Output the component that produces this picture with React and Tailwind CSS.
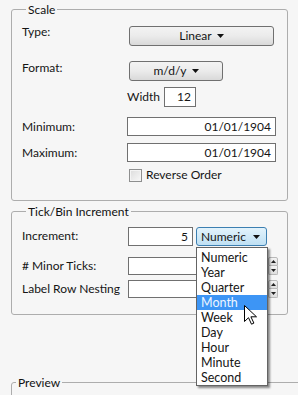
import React from 'react';

const Caret = () => (
  <svg width="7" height="4" viewBox="0 0 7 4" className="shrink-0">
    <path d="M0 0h7L3.5 4z" fill="#111" />
  </svg>
);

const Spinner = () => (
  <div className="flex flex-col w-[10px] h-[18px] ml-[1px]">
    <div className="h-[9px] bg-gradient-to-b from-[#f4f4f4] to-[#dedede] border border-[#b9b9b9] rounded-t-[2px] flex items-center justify-center">
      <svg width="5" height="3" viewBox="0 0 5 3"><path d="M0 3h5L2.5 0z" fill="#222" /></svg>
    </div>
    <div className="h-[9px] bg-gradient-to-b from-[#f4f4f4] to-[#dedede] border border-t-0 border-[#b9b9b9] rounded-b-[2px] flex items-center justify-center">
      <svg width="5" height="3" viewBox="0 0 5 3"><path d="M0 0h5L2.5 3z" fill="#222" /></svg>
    </div>
  </div>
);

const Legend = ({ children }) => (
  <legend className="ml-[4px] px-[2px] leading-[17px] text-[#111]">{children}</legend>
);

const items = ['Numeric', 'Year', 'Quarter', 'Month', 'Week', 'Day', 'Hour', 'Minute', 'Second'];

export default function App() {
  return (
    <div className="relative w-[298px] h-[395px] overflow-hidden bg-[#f6f6f6] font-[Lato,sans-serif] text-[12px] leading-[16px] text-[#151515] pl-[11px] pr-[10px] pt-[1px]">
      {/* Scale */}
      <fieldset className="h-[200px] border border-[#adadad] rounded-[3px] pl-[10px]">
        <Legend>Scale</Legend>

        <div className="flex items-start mt-[8px] h-[20px]">
          <span className="w-[107px] -mt-[2px]">Type:</span>
          <button className="w-[145px] h-[20px] flex items-center justify-center gap-[5px] rounded-[3px] border border-[#707070] bg-gradient-to-b from-[#f3f3f3] via-[#ebebeb] to-[#d9d9d9]">
            <span>Linear</span>
            <Caret />
          </button>
        </div>

        <div className="flex items-start mt-[15px] h-[20px]">
          <span className="w-[107px] -mt-[1px]">Format:</span>
          <button className="w-[94px] h-[20px] flex items-center justify-center gap-[5px] rounded-[3px] border border-[#707070] bg-gradient-to-b from-[#f3f3f3] via-[#ebebeb] to-[#d9d9d9]">
            <span>m/d/y</span>
            <Caret />
          </button>
        </div>

        <div className="flex items-center mt-[6px] h-[20px]">
          <span className="ml-[105px] w-[37px]">Width</span>
          <div className="w-[32px] h-[20px] bg-white border border-[#707070] text-right pr-[4px] leading-[18px]">12</div>
        </div>

        <div className="flex items-center mt-[10px] h-[19px]">
          <span className="w-[105px]">Minimum:</span>
          <div className="w-[149px] h-[19px] bg-white border border-[#707070] text-right pr-[4px] leading-[17px]">01/01/1904</div>
        </div>

        <div className="flex items-center mt-[7px] h-[19px]">
          <span className="w-[105px]">Maximum:</span>
          <div className="w-[149px] h-[19px] bg-white border border-[#707070] text-right pr-[4px] leading-[17px]">01/01/1904</div>
        </div>

        <div className="flex items-center mt-[6px] h-[14px] ml-[107px]">
          <span className="w-[13px] h-[13px] border border-[#8e8f8f] bg-gradient-to-br from-[#dcdcdc] to-[#f8f8f8] shadow-[inset_0_0_0_1px_#f4f4f4]" />
          <span className="ml-[4px]">Reverse Order</span>
        </div>
      </fieldset>

      {/* Tick/Bin Increment */}
      <fieldset className="mt-[2px] h-[112px] border border-[#adadad] rounded-[3px] pl-[10px]">
        <Legend>Tick/Bin Increment</Legend>

        <div className="flex items-center mt-[7px] h-[19px]">
          <span className="w-[106px] -mt-[2px]">Increment:</span>
          <div className="w-[65px] h-[19px] bg-white border border-[#707070] text-right pr-[4px] leading-[17px]">5</div>
          <button className="ml-[3px] w-[71px] h-[19px] flex items-center justify-between pl-[4px] pr-[6px] rounded-[3px] border border-[#3c7fb1] bg-gradient-to-b from-[#e3f3fc] to-[#bfe0f3]">
            <span>Numeric</span>
            <Caret />
          </button>
        </div>

        <div className="flex items-center mt-[11px] h-[18px]">
          <span className="w-[106px]"># Minor Ticks:</span>
          <div className="w-[139px] h-[18px] bg-white border border-[#707070]" />
          <Spinner />
        </div>

        <div className="flex items-center mt-[5px] h-[18px]">
          <span className="w-[106px]">Label Row Nesting</span>
          <div className="w-[139px] h-[18px] bg-white border border-[#707070]" />
          <Spinner />
        </div>
      </fieldset>

      {/* Preview */}
      <fieldset className="mt-[59px] -mr-[20px] h-[60px] border border-[#adadad] rounded-[3px]">
        <Legend>Preview</Legend>
      </fieldset>

      {/* Open dropdown list */}
      <ul className="absolute left-[196px] top-[247px] w-[72px] bg-white border border-[#646464] pt-[2px] shadow-[2px_2px_2px_rgba(0,0,0,0.45)]">
        {items.map((it) => (
          <li
            key={it}
            className={`h-[15px] leading-[15px] pl-[4px] text-[12.5px] ${it === 'Month' ? 'bg-[#3d95f5] text-[#eef5ff]' : ''}`}
          >
            {it}
          </li>
        ))}
      </ul>

      {/* Mouse pointer */}
      <svg className="absolute left-[244px] top-[305px]" width="13" height="20" viewBox="0 0 13 20">
        <path d="M0.5 0.5v16l4-3.8 3 6.5 2.4-1.1-3-6.3h5.6z" fill="#fff" stroke="#000" strokeWidth="1" strokeLinejoin="round" />
      </svg>
    </div>
  );
}
